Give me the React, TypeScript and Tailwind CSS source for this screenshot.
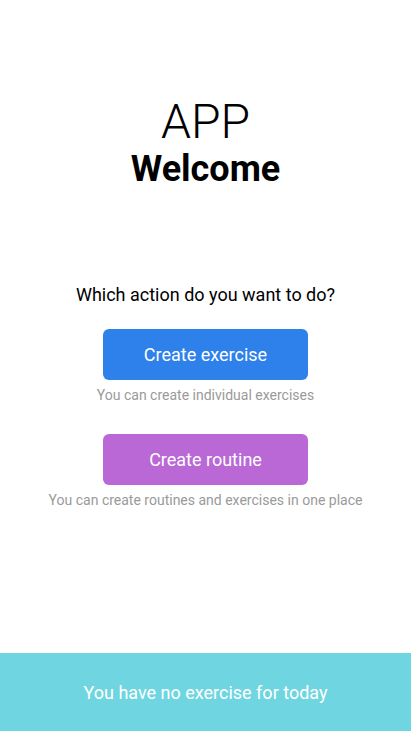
export default function App() {
  return (
    <div
      className="flex min-h-[731px] w-full flex-col items-center bg-white"
      style={{ fontFamily: "Roboto, 'Noto Sans', sans-serif" }}
    >
      <div className="mt-[96px] text-[48px] font-light leading-[52px] text-black">APP</div>
      <div className="text-[36px] font-bold leading-[42px] text-black">Welcome</div>
      <div className="mt-[93px] text-[18px] leading-[24px] text-black">
        Which action do you want to do?
      </div>
      <button className="mt-[22px] flex h-[51px] w-[205px] items-center justify-center rounded-[6px] bg-[#2e80eb] text-[18px] text-white">
        Create exercise
      </button>
      <div className="mt-[5px] text-[14px] leading-[20px] text-[#9a9a9a]">
        You can create individual exercises
      </div>
      <button className="mt-[29px] flex h-[51px] w-[205px] items-center justify-center rounded-[6px] bg-[#ba68d6] text-[18px] text-white">
        Create routine
      </button>
      <div className="mt-[5px] text-[14px] leading-[20px] text-[#9a9a9a]">
        You can create routines and exercises in one place
      </div>
      <div className="mt-auto flex h-[78px] w-full items-center justify-center bg-[#6fd5e0] text-[18px] text-white">
        You have no exercise for today
      </div>
    </div>
  );
}
